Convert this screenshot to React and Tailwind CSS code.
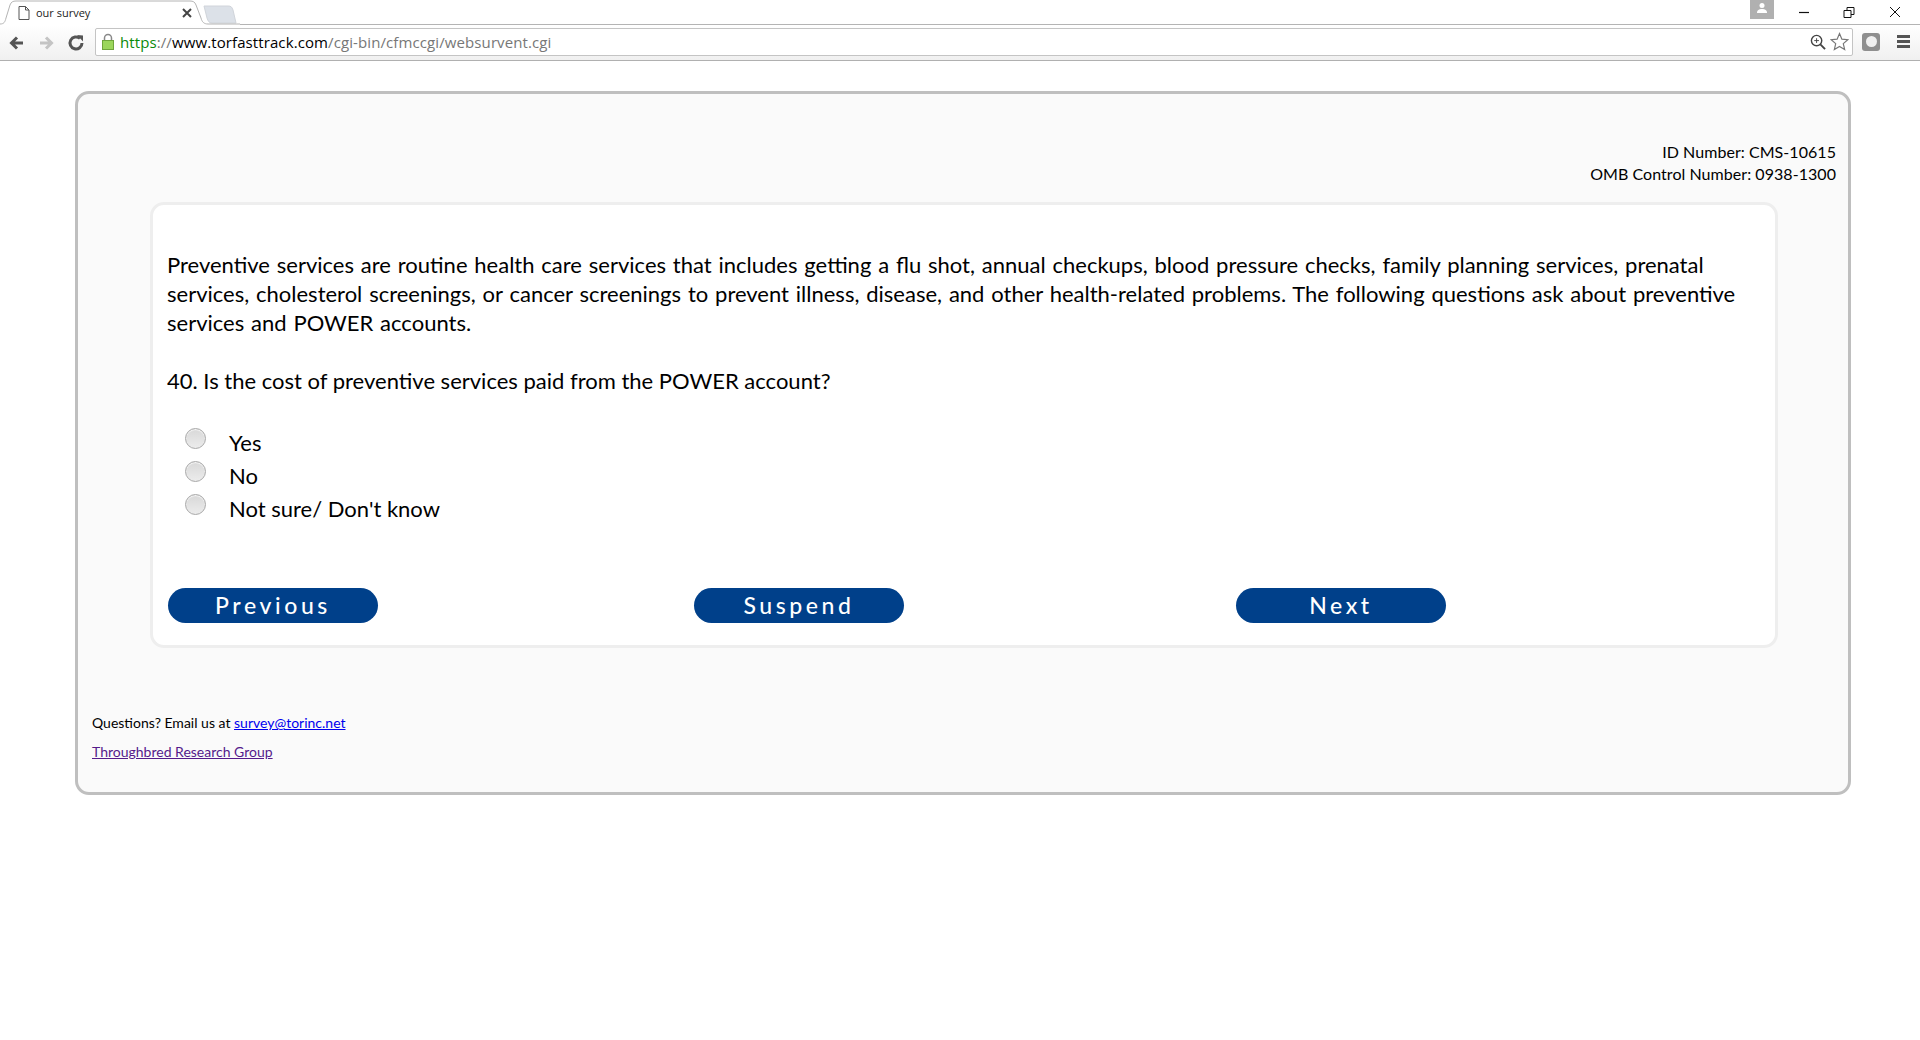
import React from 'react';

const Radio = () => (
  <span className="block w-[21px] h-[21px] rounded-full border border-[#a8a8a8] bg-gradient-to-b from-[#d8d8d8] to-[#ececec] shadow-[inset_0_1px_1px_rgba(255,255,255,0.8)]" />
);

const PillButton = ({ label, className = '' }) => (
  <button className={`w-[210px] h-[35px] rounded-full bg-[#00408a] text-white text-[23px] leading-[35px] font-medium tracking-[3.6px] text-center ${className}`}>
    {label}
  </button>
);

const Option = ({ label }) => (
  <div className="flex items-start h-[33px]">
    <div className="w-[62px] pl-[18px]"><Radio /></div>
    <span className="text-[22px] leading-[30px]">{label}</span>
  </div>
);

const Toolbar = () => (
  <div className="h-[61px] bg-white font-['Open_Sans',sans-serif]">
    {/* tab strip */}
    <div className="relative h-[25px] flex items-end">
      <svg width="240" height="25" className="absolute left-0 top-0">
        <path d="M204 6 L228 6 C231 6 232 7 233 10 L236 23 L212 23 C209 23 208 21 207 18 Z" fill="#dce1e8" stroke="#d0d4da" />
        <path d="M0 24 C4 24 5 22 6 18 L10 5 C11 2 13 1 16 1 L190 1 C193 1 195 2 196 5 L201 18 C202 22 204 24 208 24 L240 24" fill="#fff" stroke="#b4b4b4" />
      </svg>
      <div className="absolute left-[240px] right-0 bottom-0 h-px bg-[#b4b4b4]" />
      <svg width="12" height="14" viewBox="0 0 12 14" className="absolute left-[18px] top-[6px]" fill="none" stroke="#555">
        <path d="M1 .5h6.5l3.5 3.5v9.5H1z" />
        <path d="M7.5 .5V4H11" />
      </svg>
      <span className="absolute left-[36px] top-[5px] text-[11px] leading-[15px] text-[#222]">our survey</span>
      <svg width="10" height="10" viewBox="0 0 10 10" className="absolute left-[182px] top-[8px]" stroke="#444" strokeWidth="2">
        <path d="M1 1l8 8M9 1l-8 8" />
      </svg>
      <div className="absolute left-[1750px] top-0 w-[24px] h-[19px] bg-[#b0b0b0] flex justify-center">
        <svg width="12" height="12" viewBox="0 0 12 12" fill="#fff" className="mt-[2px]">
          <circle cx="6" cy="3.5" r="2.5" />
          <path d="M1 11c0-3 2-4 5-4s5 1 5 4z" />
        </svg>
      </div>
      <svg width="130" height="16" viewBox="0 0 130 16" className="absolute left-[1798px] top-[4px]" fill="none" stroke="#111">
        <path d="M1 8.5h10" strokeWidth="1.2" />
        <path d="M46 6.500h7v7h-7zM49 6.500V3.500h7v7h-3" />
        <path d="M92 3l10 10M102 3l-10 10" />
      </svg>
    </div>
    {/* nav row */}
    <div className="relative h-[36px] flex items-center border-b border-[#b0b0b0] bg-gradient-to-b from-white to-[#f0f0f0]">
      <svg width="84" height="18" viewBox="0 0 84 18" className="ml-[9px] shrink-0" fill="none" strokeWidth="3">
        <path d="M14 9H3M8 3.500L2.500 9 8 14.500" stroke="#555" />
        <path d="M31 9h11M37 3.500L42.500 9 37 14.500" stroke="#c4c4c4" />
        <path d="M71 4.500a6 6 0 1 0 2 4.500" stroke="#555" />
        <path d="M68 1l6 .5V7.500z" fill="#555" stroke="none" />
      </svg>
      <div className="ml-[2px] w-[1758px] h-[28px] -mt-[2px] bg-white border border-[#c4c4c4] rounded-[2px] flex items-center pl-[5px] shrink-0">
        <svg width="14" height="17" viewBox="0 0 14 17" className="shrink-0">
          <path d="M3.500 8V5a3.500 3.500 0 0 1 7 0v3" fill="none" stroke="#888" strokeWidth="1.500" />
          <rect x="1.500" y="7.500" width="11" height="9" fill="#9bd65b" stroke="#6fa53b" />
        </svg>
        <span className="ml-[5px] text-[15px] leading-[20px] tracking-[0.1px]">
          <span className="text-[#0a8a0a]">https</span>
          <span className="text-[#777]">://</span>
          <span className="text-black">www.torfasttrack.com</span>
          <span className="text-[#777]">/cgi-bin/cfmccgi/websurvent.cgi</span>
        </span>
        <div className="ml-auto flex items-center gap-[4px] pr-[3px]">
          <svg width="16" height="16" viewBox="0 0 17 17" fill="none" stroke="#444" strokeWidth="1.500">
            <circle cx="7" cy="7" r="5.500" />
            <path d="M7 4.500v5M4.500 7h5" strokeWidth="1" />
            <path d="M11 11l5 5" strokeWidth="2" />
          </svg>
          <svg width="19" height="19" viewBox="0 0 24 24" fill="#fff" stroke="#777" strokeWidth="1.500">
            <path d="M12 2l3 7 7.500.7-5.700 5 1.700 7.300L12 18.200 5.500 22l1.700-7.300-5.700-5L9 9z" />
          </svg>
        </div>
      </div>
      <div className="ml-[9px] w-[18px] h-[18px] -mt-[2px] rounded-[3px] bg-[#8f8f8f] flex items-center justify-center shrink-0">
        <span className="block w-[11px] h-[11px] rounded-full bg-[#f0f0f0]" />
      </div>
      <div className="ml-[17px] w-[13px] -mt-[2px] flex flex-col gap-[2px] shrink-0">
        <span className="block h-[3px] bg-[#555]" />
        <span className="block h-[3px] bg-[#555]" />
        <span className="block h-[3px] bg-[#555]" />
      </div>
    </div>
  </div>
);

export default function App() {
  return (
    <div className="min-h-[1040px] bg-white text-black font-['Lato',sans-serif]">
      <Toolbar />

      <div className="mt-[30px] ml-[75px] w-[1776px] h-[704px] border-[3px] border-[#bfbfbf] rounded-[14px] bg-[#fafafa] pt-[47px]">
        <div className="text-right pr-[12px] text-[16px] leading-[22px] tracking-[0.05px]">
          <div>ID Number: CMS-10615</div>
          <div>OMB Control Number: 0938-1300</div>
        </div>

        <div className="mt-[17px] ml-[72px] w-[1628px] h-[446px] border-[3px] border-[#eeeeee] rounded-[14px] bg-white pl-[14px] pt-[45px]">
          <p className="w-[1590px] text-[22px] leading-[29px] [word-spacing:1.2px]">
            Preventive services are routine health care services that includes getting a flu shot, annual checkups, blood pressure checks, family planning services, prenatal services, cholesterol screenings, or cancer screenings to prevent illness, disease, and other health-related problems. The following questions ask about preventive services and POWER accounts.
          </p>
          <p className="mt-[29px] text-[22px] leading-[29px]">
            40. Is the cost of preventive services paid from the POWER account?
          </p>
          <div className="mt-[33px]">
            <Option label="Yes" />
            <Option label="No" />
            <Option label="Not sure/ Don't know" />
          </div>
          <div className="mt-[61px] ml-[1px] flex">
            <PillButton label="Previous" />
            <PillButton label="Suspend" className="ml-[316px]" />
            <PillButton label="Next" className="ml-[332px]" />
          </div>
        </div>

        <div className="mt-[65px] pl-[14px] text-[14px] leading-[20px]">
          <div>
            Questions? Email us at <a href="#" className="text-[#0000ee] underline">survey@torinc.net</a>
          </div>
          <div className="mt-[9px]">
            <a href="#" className="text-[#551a8b] underline">Throughbred Research Group</a>
          </div>
        </div>
      </div>
    </div>
  );
}
